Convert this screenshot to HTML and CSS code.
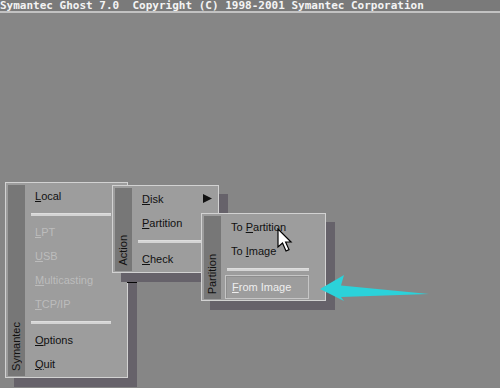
FILE: index.html
```html
<!DOCTYPE html>
<html>
<head>
<meta charset="utf-8">
<link rel="stylesheet" href="styles.css">
</head>
<body>
<div class="screen">
  <div class="titlebar">Symantec Ghost 7.0  Copyright (C) 1998-2001 Symantec Corporation</div>

  <div class="menu m1">
    <div class="side"><span>Symantec</span></div>
    <ul class="items">
      <li class="item"><u>L</u>ocal</li>
      <li class="sep"></li>
      <li class="item off"><u>L</u>PT</li>
      <li class="item off"><u>U</u>SB</li>
      <li class="item off"><u>M</u>ulticasting</li>
      <li class="item off"><u>T</u>CP/IP</li>
      <li class="sep"></li>
      <li class="item"><u>O</u>ptions</li>
      <li class="item"><u>Q</u>uit</li>
    </ul>
  </div>

  <div class="overlap"></div>

  <div class="menu m2">
    <div class="side"><span>Action</span></div>
    <ul class="items">
      <li class="item sub"><span><u>D</u>isk</span><svg class="tri" width="9" height="9" viewBox="0 0 9 9"><path d="M0 0 L9 4.5 L0 9 Z" fill="#111"/></svg></li>
      <li class="item"><u>P</u>artition</li>
      <li class="sep"></li>
      <li class="item"><u>C</u>heck</li>
    </ul>
  </div>

  <div class="menu m3">
    <div class="side"><span>Partition</span></div>
    <ul class="items">
      <li class="item">To <u>P</u>artition</li>
      <li class="item">To <u>I</u>mage</li>
      <li class="sep"></li>
      <li class="item sel"><span class="box"><u>F</u>rom Image</span></li>
    </ul>
  </div>

  <svg class="cursor" width="16" height="25" viewBox="0 0 16 25">
    <path d="M1 1 L1 19 L5.5 15 L9 23 L12 21.6 L8.6 14 L14 14 Z" fill="#fff" stroke="#000" stroke-width="1.2" stroke-linejoin="miter"/>
  </svg>

  <svg class="pointer" width="114" height="30" viewBox="317 273 114 30">
    <polygon points="320,289 344,275 341,285.5 429,294 341,297 344,301" fill="#2bd2da"/>
  </svg>
</div>
</body>
</html>
```
FILE: styles.css
```css
* { box-sizing: border-box; }
body {
  margin: 0;
  background: #868686;
}
.screen {
  position: relative;
  width: 500px;
  height: 388px;
  overflow: hidden;
  background: #868686;
  font-family: "Liberation Sans", Arial, sans-serif;
  font-size: 11px;
  color: #111;
}
.titlebar {
  height: 13px;
  line-height: 11px;
  background: #7a7a7a;
  border-bottom: 2px solid #c2c2c2;
  color: #f4f4f4;
  font-family: "DejaVu Sans Mono", monospace;
  font-weight: bold;
  font-size: 11px;
  white-space: pre;
}
.menu {
  position: absolute;
  display: flex;
  background: #9d9d9d;
  border: 1px solid #d2d2d2;
  padding: 1px 2px;
  box-shadow: 9px 9px 0 #66626a;
}
.m1 { left: 5px; top: 182px; width: 123px; z-index: 1; }
.m2 { left: 112px; top: 185px; width: 107px; z-index: 3; }
.m3 { left: 201px; top: 213px; width: 125px; z-index: 4; }
.overlap {
  position: absolute;
  left: 127px;
  top: 273px;
  width: 10px;
  height: 10px;
  background: #050505;
  z-index: 2;
}
.side {
  width: 17px;
  flex: none;
  background: #777777;
  margin-top: 1px;
  display: flex;
  flex-direction: column;
  justify-content: flex-end;
  align-items: center;
  padding-bottom: 5px;
}
.side span {
  writing-mode: vertical-rl;
  transform: rotate(180deg);
  line-height: 17px;
  color: #111;
}
.items {
  list-style: none;
  margin: 0;
  padding: 0;
  flex: 1;
  display: flex;
  flex-direction: column;
}
.item {
  height: 24px;
  line-height: 24px;
  padding-left: 10px;
  white-space: nowrap;
}
.item.off {
  color: #bcbcbc;
}
.item.sub {
  display: flex;
  justify-content: space-between;
  align-items: center;
  padding-right: 4px;
}
.item.sub span { line-height: 24px; }
.tri { margin-top: -2px; }
.sep {
  height: 12px;
  display: flex;
  align-items: center;
  margin: 0 14px 0 6px;
}
.sep::before {
  content: "";
  display: block;
  width: 100%;
  height: 2px;
  background: #d4d4d4;
  border-top: 1px solid #dedede;
}
.item.sel {
  padding-left: 4px;
  padding-right: 14px;
}
.box {
  display: block;
  height: 24px;
  line-height: 22px;
  border: 1px solid #c6c6c6;
  box-shadow: inset 1px 1px 0 #8e8e8e;
  padding-left: 6px;
  color: #eeeeee;
}
.cursor {
  position: absolute;
  left: 277px;
  top: 228px;
  z-index: 6;
}
.pointer {
  position: absolute;
  left: 317px;
  top: 273px;
  z-index: 6;
}
```
